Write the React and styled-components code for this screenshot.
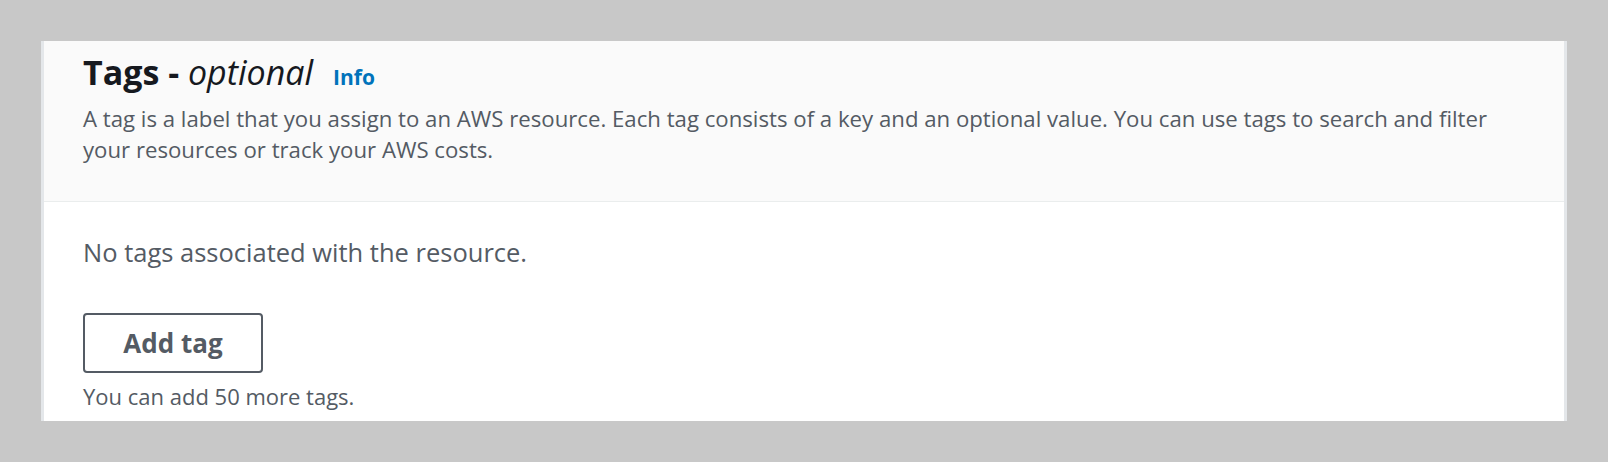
import React from 'react'
import styled, { createGlobalStyle } from 'styled-components'

const GlobalStyle = createGlobalStyle`
  html, body {
    margin: 0;
    padding: 0;
    background: #c8c8c8;
  }
  body {
    font-family: "Open Sans", "Noto Sans", Arial, sans-serif;
  }
`

const Page = styled.div`
  width: 1608px;
  height: 462px;
  padding: 41px 41px 0 41px;
  box-sizing: border-box;
`

const Panel = styled.section`
  height: 380px;
  background: #fff;
  border-left: 3px solid #e4e7ea;
  border-right: 3px solid #e4e7ea;
  display: flex;
  flex-direction: column;
  overflow: hidden;
`

const Header = styled.header`
  background: #fafafa;
  border-bottom: 1px solid #eaeded;
  padding: 11px 40px 0 39px;
  height: 161px;
  box-sizing: border-box;
`

const TitleRow = styled.div`
  display: flex;
  align-items: baseline;
  gap: 20px;
  line-height: 40px;
`

const Title = styled.h2`
  margin: 0;
  font-size: 34px;
  font-weight: 700;
  color: #16191f;

  em {
    font-weight: 400;
    font-style: italic;
  }
`

const InfoLink = styled.a`
  font-size: 21px;
  font-weight: 700;
  color: #0073bb;
  text-decoration: none;
  cursor: pointer;
`

const Description = styled.p`
  margin: 6px 0 0;
  font-size: 22.2px;
  line-height: 31px;
  color: #545b64;
`

const Body = styled.div`
  padding: 34px 39px 0;
  display: flex;
  flex-direction: column;
  align-items: flex-start;
`

const EmptyText = styled.p`
  margin: 0;
  font-size: 25.5px;
  line-height: 32px;
  color: #545b64;
`

const Button = styled.button`
  margin-top: 45px;
  width: 180px;
  height: 60px;
  border: 2px solid #545b64;
  border-radius: 4px;
  background: #fff;
  color: #545b64;
  font-family: inherit;
  font-size: 26px;
  font-weight: 700;
  cursor: pointer;
`

const Hint = styled.p`
  margin: 8px 0 0;
  font-size: 22px;
  line-height: 30px;
  color: #545b64;
`

export default function App() {
  return (
    <>
      <GlobalStyle />
      <Page>
        <Panel>
          <Header>
            <TitleRow>
              <Title>
                Tags - <em>optional</em>
              </Title>
              <InfoLink>Info</InfoLink>
            </TitleRow>
            <Description>
              A tag is a label that you assign to an AWS resource. Each tag consists of a key and an optional value. You can use tags to search and filter your resources or track your AWS costs.
            </Description>
          </Header>
          <Body>
            <EmptyText>No tags associated with the resource.</EmptyText>
            <Button>Add tag</Button>
            <Hint>You can add 50 more tags.</Hint>
          </Body>
        </Panel>
      </Page>
    </>
  )
}
